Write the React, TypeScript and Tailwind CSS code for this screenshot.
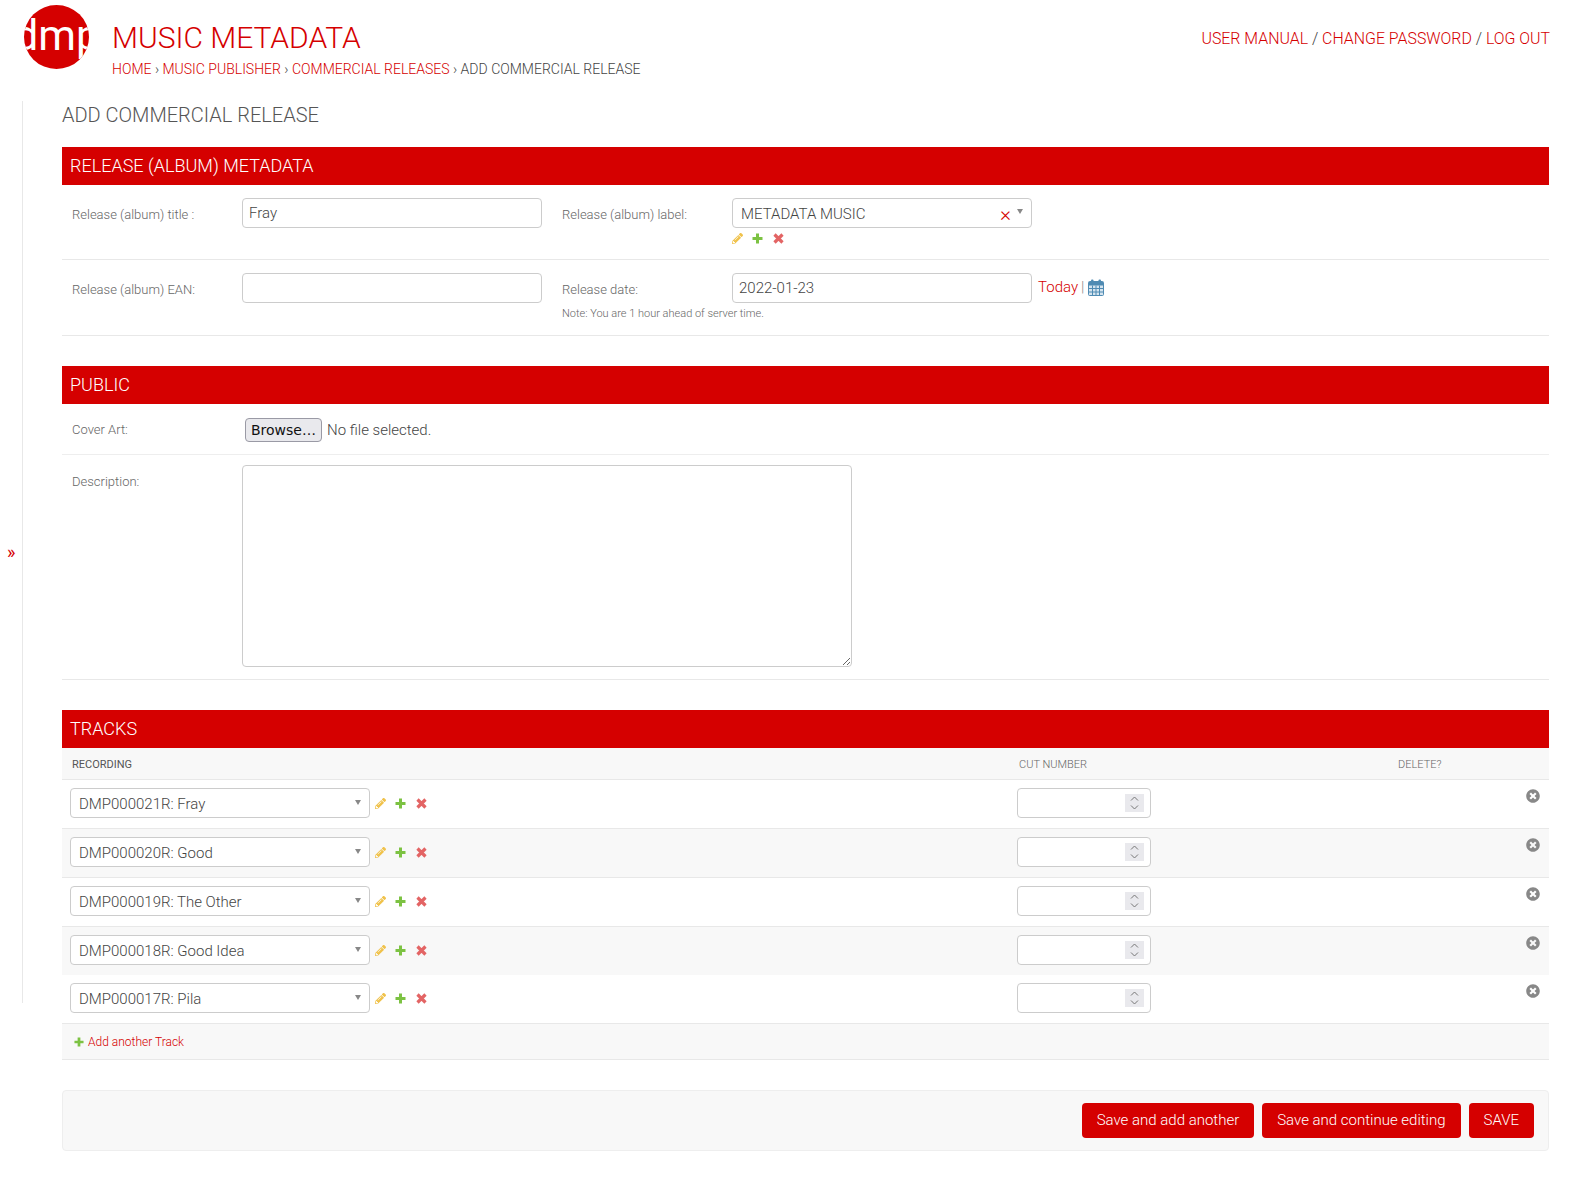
import { FaPencilAlt, FaTimesCircle } from 'react-icons/fa';

const tracks = ['DMP000021R: Fray', 'DMP000020R: Good', 'DMP000019R: The Other', 'DMP000018R: Good Idea', 'DMP000017R: Pila'];

function Caret() {
  return <span className="w-0 h-0 border-x-[3.5px] border-x-transparent border-t-[5px] border-t-[#888]" />;
}

function PlusIcon({ size = 11 }: { size?: number }) {
  return (
    <svg width={size} height={size} viewBox="0 0 11 11" fill="#7cc242" className="shrink-0">
      <path d="M4 .5h3V4h3.5v3H7v3.5H4V7H.5V4H4z" />
    </svg>
  );
}

function CrossIcon() {
  return (
    <svg width="11" height="11" viewBox="0 0 11 11" fill="none" stroke="#e36464" strokeWidth="3.2" className="ml-px shrink-0">
      <path d="M1.5 1.5l8 8M9.5 1.5l-8 8" />
    </svg>
  );
}

function CalendarIcon() {
  return (
    <svg width="16" height="17" viewBox="0 0 16 17" className="shrink-0">
      <rect x="0.5" y="2.5" width="15" height="14" rx="1" fill="#d5e4ef" stroke="#4f8bb3" />
      <rect x="1" y="3" width="14" height="3.5" fill="#4f8bb3" />
      <rect x="3" y="0.5" width="2.5" height="4" rx="1" fill="#4f8bb3" />
      <rect x="10.5" y="0.5" width="2.5" height="4" rx="1" fill="#4f8bb3" />
      <path d="M4.5 6.5v10M8 6.5v10M11.5 6.5v10M1 9.5h14M1 13h14" stroke="#4f8bb3" strokeWidth="1" fill="none" />
    </svg>
  );
}

function RowIcons({ className = '' }: { className?: string }) {
  return (
    <div className={`flex items-center gap-[9px] ${className}`}>
      <FaPencilAlt className="text-[#f0c24b]" size={11} />
      <PlusIcon />
      <CrossIcon />
    </div>
  );
}

function Bar({ title }: { title: string }) {
  return <h2 className="h-[38px] bg-[#d50000] pl-2 text-[18px] leading-[38px] text-white font-light">{title}</h2>;
}

function TextInput({ value = '', className = '' }: { value?: string; className?: string }) {
  return (
    <input
      readOnly
      value={value}
      className={`h-[30px] w-[300px] rounded border border-[#ccc] bg-white px-1.5 text-[15px] font-light text-[#444] outline-none ${className}`}
    />
  );
}

function Label({ children, className = '' }: { children: string; className?: string }) {
  return <label className={`text-[13px] font-light text-[#666] ${className}`}>{children}</label>;
}

export default function App() {
  return (
    <div className="min-h-[1191px] bg-white font-['Roboto',sans-serif] text-[#444]">
      {/* Header */}
      <header className="flex h-[101px] pl-6 pr-10">
        <svg width="65" height="65" viewBox="0 0 65 65" className="mt-[5px] shrink-0">
          <defs>
            <clipPath id="logoClip">
              <ellipse cx="32.5" cy="32" rx="32.5" ry="32" />
            </clipPath>
          </defs>
          <ellipse cx="32.5" cy="32" rx="32.5" ry="32" fill="#d50000" />
          <g clipPath="url(#logoClip)">
            <text x="33" y="45" textAnchor="middle" fill="#fff" fontFamily="Roboto, sans-serif" fontSize="43" fontWeight="400">
              dmp
            </text>
          </g>
        </svg>
        <div className="ml-[23px] pt-[19px]">
          <h1 className="text-[30px] leading-[38px] font-light text-[#d50000]">MUSIC METADATA</h1>
          <nav className="mt-[2px] text-[14px] leading-[20px] font-light">
            <a className="text-[#d50000]">HOME</a> › <a className="text-[#d50000]">MUSIC PUBLISHER</a> ›{' '}
            <a className="text-[#d50000]">COMMERCIAL RELEASES</a> › ADD COMMERCIAL RELEASE
          </nav>
        </div>
        <div className="ml-auto pt-[29px] text-[15.9px] leading-[20px] font-light">
          <a className="text-[#d50000]">USER MANUAL</a> / <a className="text-[#d50000]">CHANGE PASSWORD</a> /{' '}
          <a className="text-[#d50000]">LOG OUT</a>
        </div>
      </header>

      <div className="flex items-start">
        {/* Sidebar toggle */}
        <div className="flex h-[902px] w-[23px] shrink-0 items-center border-r border-[#e8e8e8] pl-[7px]">
          <span className="text-[18px] leading-none font-normal text-[#d50000]">»</span>
        </div>

        <main className="ml-[39px] w-[1487px] shrink-0">
          <h1 className="pt-[1px] text-[20px] leading-[26px] font-light text-[#555]">ADD COMMERCIAL RELEASE</h1>

          {/* Release metadata */}
          <section className="mt-[19px]">
            <Bar title="RELEASE (ALBUM) METADATA" />
            <div className="flex h-[75px] border-b border-[#e8e8e8] pt-[13px]">
              <Label className="w-[180px] shrink-0 pl-[10px] pt-[7px]">Release (album) title :</Label>
              <TextInput value="Fray" />
              <Label className="ml-[20px] w-[170px] shrink-0 pt-[7px]">Release (album) label:</Label>
              <div>
                <div className="flex h-[30px] w-[300px] items-center rounded border border-[#ccc] pl-2 pr-[8px]">
                  <span className="pt-[2px] text-[15px] font-light">METADATA MUSIC</span>
                  <span className="ml-auto mt-[3px] text-[21px] leading-none font-light text-[#d50000]">×</span>
                  <span className="ml-[6px] mb-[4px] flex">
                    <Caret />
                  </span>
                </div>
                <RowIcons className="mt-[5px]" />
              </div>
            </div>
            <div className="flex h-[76px] border-b border-[#e8e8e8] pt-[13px]">
              <Label className="w-[180px] shrink-0 pl-[10px] pt-[7px]">Release (album) EAN:</Label>
              <TextInput />
              <div className="ml-[20px]">
                <div className="flex">
                  <Label className="w-[170px] shrink-0 pt-[7px]">Release date:</Label>
                  <TextInput value="2022-01-23" />
                  <div className="ml-[6px] flex h-[30px] items-center pb-[2px] text-[15px] font-light">
                    <a className="text-[#d50000]">Today</a>
                    <span className="ml-[3px] mr-[4px] text-[#888]">|</span>
                    <CalendarIcon />
                  </div>
                </div>
                <p className="mt-[4px] text-[11px] leading-[14px] font-light text-[#666]">Note: You are 1 hour ahead of server time.</p>
              </div>
            </div>
          </section>

          {/* Public */}
          <section className="mt-[30px]">
            <Bar title="PUBLIC" />
            <div className="flex h-[51px] items-center border-b border-[#eee] pt-[2px]">
              <Label className="w-[183px] shrink-0 pl-[10px]">Cover Art:</Label>
              <button className="h-[24px] w-[77px] rounded border border-[#9a9aa5] bg-[#e9e9ed] font-['DejaVu_Sans',sans-serif] text-[14px] leading-none text-[#111]">
                Browse…
              </button>
              <span className="ml-[5px] text-[15px] font-light">No file selected.</span>
            </div>
            <div className="flex h-[225px] border-b border-[#e8e8e8] pt-[10px]">
              <Label className="w-[180px] shrink-0 pl-[10px] pt-[7px]">Description:</Label>
              <textarea readOnly className="h-[202px] w-[610px] resize rounded border border-[#ccc] bg-white outline-none" />
            </div>
          </section>

          {/* Tracks */}
          <section className="mt-[30px]">
            <Bar title="TRACKS" />
            <div className="grid h-[32px] grid-cols-[945px_381px_1fr] items-center border-b border-[#e8e8e8] bg-[#f8f8f8] pl-[10px] pt-[3px] text-[11px] font-light text-[#666]">
              <span className="font-normal text-[#555]">RECORDING</span>
              <span className="pl-[2px]">CUT NUMBER</span>
              <span>DELETE?</span>
            </div>
            {tracks.map((t, i) => (
              <div
                key={t}
                className={`flex items-start pl-2 pt-[8px] ${i === 3 ? 'h-[48px]' : 'h-[49px] border-b border-[#e8e8e8]'} ${i % 2 === 1 ? 'bg-[#f8f8f8]' : 'bg-white'}`}
              >
                <div className="flex h-[30px] w-[300px] shrink-0 items-center justify-between rounded border border-[#ccc] bg-white pl-2 pr-[8px]">
                  <span className="pt-[2px] text-[15px] font-light">{t}</span>
                  <span className="mb-[2px] flex">
                    <Caret />
                  </span>
                </div>
                <RowIcons className="ml-[5px] h-[30px] w-[60px]" />
                <div className="ml-[582px] flex h-[30px] w-[134px] shrink-0 items-center justify-end rounded border border-[#ccc] bg-white pr-[6px]">
                  <span className="flex h-[18px] w-[19px] flex-col items-center justify-center bg-[#e9e9ed]">
                    <svg width="9" height="14" viewBox="0 0 9 14" fill="none" stroke="#777" strokeWidth="1">
                      <path d="M1 4.5 4.5 1 8 4.5M1 9.5 4.5 13 8 9.5" />
                    </svg>
                  </span>
                </div>
                <FaTimesCircle className="ml-auto mr-[9px] mt-px text-[#888]" size={14} />
              </div>
            ))}
            <div className="flex h-[36px] items-center border-b border-[#e8e8e8] bg-[#f8f8f8] pl-[12px] text-[12px]">
              <PlusIcon size={10} />
              <a className="ml-[4px] font-light text-[#d50000]">Add another Track</a>
            </div>
          </section>

          {/* Submit row */}
          <div className="mt-[30px] flex h-[61px] items-center justify-end gap-[8px] rounded border border-[#eee] bg-[#f8f8f8] pr-[14px]">
            {['Save and add another', 'Save and continue editing', 'SAVE'].map((b) => (
              <button key={b} className="h-[35px] rounded bg-[#d50000] px-[15px] text-[15px] font-light text-white">
                {b}
              </button>
            ))}
          </div>
        </main>
      </div>
    </div>
  );
}
